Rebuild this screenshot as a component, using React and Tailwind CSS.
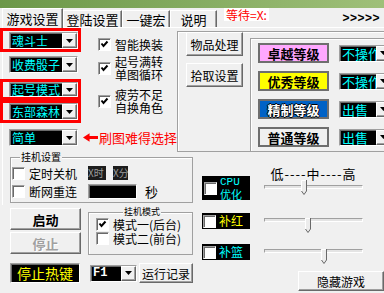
import React from "react";

const raised = "border border-t-white border-l-white border-r-[#696969] border-b-[#696969] shadow-[inset_-1px_-1px_0_#a0a0a0]";
const sunken = "border border-t-[#a0a0a0] border-l-[#a0a0a0] border-r-white border-b-white shadow-[inset_1px_1px_0_#696969]";
const etched = "border-[#a0a0a0] shadow-[inset_1px_1px_0_#ffffff]";

function DropBtn() {
    return (
        <div className={`w-[15px] shrink-0 self-stretch bg-[#f0f0f0] ${raised} flex items-center justify-center`}>
            <svg width="7" height="4" viewBox="0 0 7 4"><path d="M0 0h7L3.5 4z" fill="#000" /></svg>
        </div>
    );
}

function Combo({ text, className, textClass = "text-[#00ffff] text-[12px]" }) {
    return (
        <div className={`flex shrink-0 bg-black ${sunken} ${className}`}>
            <div className={`flex-1 overflow-hidden whitespace-nowrap pl-[2px] leading-none flex items-center ${textClass}`}>{text}</div>
            <DropBtn />
        </div>
    );
}

function Check({ on }) {
    return (
        <div className={`w-[13px] h-[13px] shrink-0 bg-white ${sunken} flex items-center justify-center`}>
            {on && (
                <svg width="9" height="9" viewBox="0 0 9 9">
                    <path d="M1.5 3.5 L3.5 6 L7.5 1.5" stroke="#000" strokeWidth="2" fill="none" />
                </svg>
            )}
        </div>
    );
}

function Btn({ children, className = "" }) {
    return (
        <div className={`flex items-center justify-center shrink-0 bg-[#f0f0f0] ${raised} ${className}`}>{children}</div>
    );
}

function Slider({ thumb }) {
    return (
        <div className="relative w-[99px] h-[15px] shrink-0">
            <div className="mt-[5px] h-[4px] border border-t-[#a0a0a0] border-l-[#a0a0a0] border-r-white border-b-white bg-[#e4e4e4]" />
            <svg className={`absolute top-0 ${thumb}`} width="6" height="15" viewBox="0 0 6 15">
                <path d="M0 0H6V11L3 14.5L0 11Z" fill="#ececec" />
                <path d="M0.5 11V0.5H5" stroke="#fff" fill="none" />
                <path d="M5.5 0V11L3 14.5L0.5 11" stroke="#696969" fill="none" />
            </svg>
        </div>
    );
}

function Level({ label, bg, opt }) {
    return (
        <div className="flex items-center">
            <div className={`ml-[7px] w-[71px] h-[20px] shrink-0 border-2 border-[#6e6e6e] flex items-center justify-center font-bold text-[13px] leading-none ${bg}`}>{label}</div>
            <Combo text={opt} className="ml-[10px] w-[53px] h-[17px]" textClass="text-[#00ffff] text-[13px]" />
        </div>
    );
}

function Tab({ w, children }) {
    return (
        <div className={`${w} h-[17px] shrink-0 border-t border-l border-r border-t-white border-l-white border-r-[#696969] shadow-[inset_-1px_0_0_#a0a0a0] flex items-center justify-center text-[13px] leading-none`}>{children}</div>
    );
}

export default function App() {
    return (
        <div className="w-[384px] h-[293px] overflow-hidden bg-[#f0f0f0] text-black font-['Noto_Sans_CJK_SC',sans-serif] text-[12px] leading-[13px]">
            <div className="h-[8px] bg-linear-to-r from-[#6b9748] to-[#9fc079]" />

            {/* tabs */}
            <div className="flex h-[20px] items-end">
                <div className="ml-[2px] w-[61px] h-[20px] shrink-0 border-t border-l border-r border-t-white border-l-white border-r-[#696969] shadow-[inset_-1px_0_0_#a0a0a0] flex items-center justify-center text-[13px] leading-none">游戏设置</div>
                <div className="flex flex-1 self-stretch items-end border-b border-white">
                    <Tab w="w-[59px]">登陆设置</Tab>
                    <Tab w="w-[48px]">一键宏</Tab>
                    <Tab w="w-[47px]">说明</Tab>
                    <div className="ml-[7px] self-start h-[13px] bg-white px-[2px] text-[#ff0000] text-[12px] leading-[13px] whitespace-nowrap">等待=X:</div>
                    <div className="ml-auto mr-[4px] self-center font-bold text-[12px] leading-none tracking-[0.5px] font-['Liberation_Sans',sans-serif]">&gt;&gt;&gt;&gt;&gt;</div>
                </div>
            </div>

            {/* upper section */}
            <div className="flex h-[125px]">
                <div className="w-[177px] shrink-0 flex flex-col shadow-[inset_2px_0_0_#f0f0f0,inset_3px_0_0_#ffffff]">
                    <div className="flex">
                        <div className="w-[82px] shrink-0 flex flex-col">
                            <div className="w-[81px] h-[24px] border-[3px] border-[#ff0000] pl-[6px] pt-[1px]">
                                <Combo text="魂斗士" className="w-[69px] h-[17px]" />
                            </div>
                            <Combo text="收费骰子" className="ml-[9px] mt-[4px] w-[69px] h-[17px]" />
                            <div className="mt-[6px] w-[81px] h-[21px] border-[3px] border-[#ff0000] pl-[6px]">
                                <Combo text="起号模式" className="w-[69px] h-[15px]" />
                            </div>
                            <div className="w-[81px] h-[23px] border-[3px] border-[#ff0000] pl-[6px]">
                                <Combo text="东部森林" className="w-[69px] h-[17px]" />
                            </div>
                        </div>
                        <div className="flex flex-col pl-[16px]">
                            <div className="mt-[10px] flex items-center gap-[4px] h-[13px]">
                                <Check on />
                                <span>智能换装</span>
                            </div>
                            <div className="mt-[4px] flex items-center gap-[4px]">
                                <Check on />
                                <div className="leading-[13px]">起号满转<br />单图循环</div>
                            </div>
                            <div className="mt-[7px] flex items-center gap-[4px]">
                                <Check on />
                                <div className="leading-[13px]">疲劳不足<br />自换角色</div>
                            </div>
                        </div>
                    </div>
                    <div className="mt-[6px] flex items-center">
                        <Combo text="简单" className="ml-[9px] w-[69px] h-[17px]" />
                        <svg className="ml-[5px]" width="16" height="9" viewBox="0 0 16 9">
                            <path d="M0 4.5 L7 0 V3 H16 V6 H7 V9 Z" fill="#ff0000" />
                        </svg>
                        <span className="ml-[1px] text-[#ff0000] text-[13px] leading-[13px] whitespace-nowrap">刷图难得选择</span>
                    </div>
                </div>

                <div className={`flex-1 mt-[3px] h-[121px] border-l border-t border-b ${etched} flex`}>
                    <div className="ml-[8px] flex flex-col">
                        <Btn className="w-[57px] h-[24px]">物品处理</Btn>
                        <Btn className="mt-[7px] w-[57px] h-[24px]">拾取设置</Btn>
                    </div>
                    <div className={`ml-[7px] mt-[6px] flex-1 border-l border-t ${etched} pt-[4px] flex flex-col gap-[8px]`}>
                        <Level label="卓越等级" bg="bg-[#ffa8ff]" opt="不操作" />
                        <Level label="优秀等级" bg="bg-[#ffff00]" opt="不操作" />
                        <Level label="精制等级" bg="bg-[#0062c6] border-[#3a5f90] text-white [text-shadow:1px_0_0_#000,-1px_0_0_#000,0_1px_0_#000,0_-1px_0_#000]" opt="出售" />
                        <Level label="普通等级" bg="bg-[#f0f0f0]" opt="出售" />
                    </div>
                </div>
            </div>

            {/* lower section */}
            <div className="flex">
                <div className="w-[193px] shrink-0 flex flex-col">
                    <div className="h-[52px] pt-[4px] pl-[10px] shadow-[inset_2px_0_0_#f0f0f0,inset_3px_0_0_#ffffff]">
                        <div className={`relative w-[183px] h-[46px] border ${etched}`}>
                            <span className="absolute left-[9px] -top-[6px] bg-[#f0f0f0] px-px text-[10px] leading-[10px]">挂机设置</span>
                            <div className="mt-[8px] ml-[1px] flex items-center h-[14px]">
                                <Check />
                                <span className="ml-[4px] w-[48px]">定时关机</span>
                                <div className="ml-[11px] w-[18px] h-[14px] bg-[#1c1c1c] text-[#9a9a9a] text-[10px] leading-[14px] overflow-hidden whitespace-nowrap">X时</div>
                                <div className="ml-[7px] w-[15px] h-[14px] bg-[#1c1c1c] text-[#9a9a9a] text-[10px] leading-[14px] overflow-hidden whitespace-nowrap">X分</div>
                            </div>
                            <div className="mt-[4px] ml-[1px] flex items-center h-[15px]">
                                <Check />
                                <span className="ml-[4px] w-[48px]">断网重连</span>
                                <div className={`ml-[11px] w-[49px] h-[15px] bg-black ${sunken}`} />
                                <span className="ml-[8px] text-[13px]">秒</span>
                            </div>
                        </div>
                    </div>

                    <div className="mt-[3px] flex">
                        <div className="ml-[10px] flex flex-col">
                            <Btn className="w-[71px] h-[22px] font-bold text-[13px]">启动</Btn>
                            <Btn className="mt-[2px] w-[71px] h-[22px] font-bold text-[13px] text-[#a0a0a0] [text-shadow:1px_1px_0_#fff]">停止</Btn>
                        </div>
                        <div className={`relative ml-[7px] mt-[4px] w-[105px] h-[43px] border ${etched}`}>
                            <span className="absolute left-[34px] -top-[6px] bg-[#f0f0f0] px-px text-[9px] leading-[10px]">挂机模式</span>
                            <div className="mt-[5px] ml-[7px] flex items-center gap-[4px] h-[13px]">
                                <Check on />
                                <span className="whitespace-nowrap">模式一(后台)</span>
                            </div>
                            <div className="mt-[1px] ml-[7px] flex items-center gap-[4px] h-[13px]">
                                <Check />
                                <span className="whitespace-nowrap">模式二(前台)</span>
                            </div>
                        </div>
                    </div>

                    <div className="mt-[8px] flex items-center">
                        <div className={`ml-[10px] w-[70px] h-[20px] bg-black ${sunken} flex items-center justify-center text-[#ffff00] text-[14px] leading-none`}>停止热键</div>
                        <Combo text="F1" className="ml-[10px] w-[47px] h-[17px]" textClass="text-white font-bold text-[12px] font-['Liberation_Mono',monospace]" />
                        <Btn className="ml-[2px] w-[54px] h-[20px]">运行记录</Btn>
                    </div>
                </div>

                <div className="flex-1 flex flex-col">
                    <div className="mt-[14px] flex items-start">
                        <div className="mt-[9px] ml-[9px] w-[48px] h-[24px] shrink-0 bg-black flex items-center">
                            <div className="ml-[2px]"><Check /></div>
                            <div className="ml-[3px] text-[#00ffff] flex flex-col">
                                <span className="text-[11px] leading-[11px] font-['Liberation_Mono',monospace]">CPU</span>
                                <span className="text-[11px] leading-[12px]">优化</span>
                            </div>
                        </div>
                        <div className="ml-[14px] flex flex-col">
                            <div className="h-[13px] text-[13px] leading-[13px] text-center tracking-[1px] whitespace-nowrap">低----中----高</div>
                            <Slider thumb="left-[37px]" />
                        </div>
                    </div>
                    <div className="mt-[13px] flex items-start">
                        <div className="ml-[9px] w-[48px] h-[16px] shrink-0 bg-black flex items-center">
                            <div className="ml-[1px]"><Check /></div>
                            <span className="ml-[3px] text-[#ffff00] text-[12px] leading-none">补红</span>
                        </div>
                        <div className="ml-[14px]"><Slider thumb="left-[41px]" /></div>
                    </div>
                    <div className="mt-[11px] flex items-start">
                        <div className="ml-[9px] w-[48px] h-[16px] shrink-0 bg-black flex items-center">
                            <div className="ml-[1px]"><Check /></div>
                            <span className="ml-[3px] text-[#00ffff] text-[12px] leading-none">补篮</span>
                        </div>
                        <div className="ml-[14px]"><Slider thumb="left-[57px]" /></div>
                    </div>
                    <Btn className="mt-[7px] self-end w-[86px] h-[20px]">隐藏游戏</Btn>
                </div>
            </div>
        </div>
    );
}
